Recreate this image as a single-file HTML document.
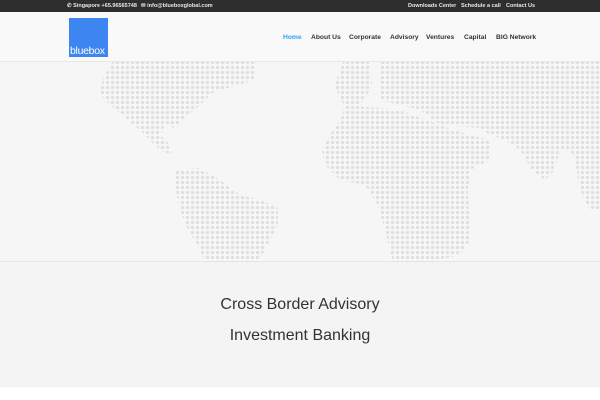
<!DOCTYPE html><html><head><style>
*{margin:0;padding:0;box-sizing:border-box}
body{width:600px;height:400px;overflow:hidden;background:#fff;font-family:"Liberation Sans",sans-serif;position:relative}
.top{position:absolute;left:0;top:0;width:600px;height:12px;background:#2e2e2e;color:#e8e8e8;font-size:5.5px;font-weight:bold}
.top span{position:absolute;top:3px;white-space:nowrap}
.hdr{position:absolute;top:12px;left:0;width:600px;height:50px;background:#f9f9f9;border-bottom:1px solid #e8e8e8}
.logo{position:absolute;left:69px;top:6px;width:39px;height:39px;background:#3d85f0;color:#fff;font-size:10.5px;letter-spacing:-0.3px}
.logo span{position:absolute;left:1px;bottom:0}
.nav span{position:absolute;top:22px;font-size:6.7px;color:#333;font-weight:bold;white-space:nowrap}
.hero{position:absolute;top:62px;left:0;width:600px;height:200px;background:#f6f6f6;border-bottom:1px solid #e6e6e6}
.sec{position:absolute;top:262px;left:0;width:600px;height:125px;background:#f4f4f4}
.t{position:absolute;width:600px;text-align:center;font-size:16px;color:#333}
</style></head><body>
<div class="top">
<span style="left:67px">✆ Singapore +65.96565748</span>
<span style="left:141px">✉ info@blueboxglobal.com</span>
<span style="left:408px">Downloads Center</span>
<span style="left:461px">Schedule a call</span>
<span style="left:506px">Contact Us</span>
</div>
<div class="hdr">
<div class="logo"><span>bluebox</span></div>
<div class="nav">
<span style="left:283px;color:#2ea3f2">Home</span>
<span style="left:311px">About Us</span>
<span style="left:349px">Corporate</span>
<span style="left:390px">Advisory</span>
<span style="left:426px">Ventures</span>
<span style="left:464px">Capital</span>
<span style="left:496px">BIG Network</span>
</div>
</div>
<div class="hero">
<svg width="600" height="200" viewBox="0 62 600 200" style="position:absolute;left:0;top:0">
<defs><pattern id="d" x="0" y="0" width="5" height="5" patternUnits="userSpaceOnUse"><circle cx="2.5" cy="2.5" r="1.6" fill="#dfdfdf"/></pattern></defs>
<g fill="url(#d)">
<polygon points="113,62 255,62 255,80 235,86 212,93 200,105 185,118 175,128 165,125 160,135 170,145 172,155 160,150 150,140 140,130 125,118 110,105 100,93 103,78 110,66"/>
<polygon points="175,170 200,168 220,180 240,195 260,200 278,208 278,225 270,240 262,255 255,262 205,262 198,245 188,230 180,210 176,190"/>
<polygon points="343,62 370,62 372,85 365,100 350,110 340,100 335,85"/>
<polygon points="380,62 600,62 600,210 590,210 580,190 575,160 570,150 560,150 555,170 545,180 532,170 520,150 505,140 490,135 480,128 440,125 420,110 400,105 380,100"/>
<polygon points="345,105 400,110 440,125 470,135 490,140 490,160 470,170 468,190 470,240 460,255 430,262 393,262 385,230 378,205 365,185 340,180 325,165 322,150 330,135 340,120"/>
</g>
</svg>
</div>
<div class="sec">
<div class="t" style="top:34px">Cross Border Advisory</div>
<div class="t" style="top:65px">Investment Banking</div>
</div>
</body></html>
